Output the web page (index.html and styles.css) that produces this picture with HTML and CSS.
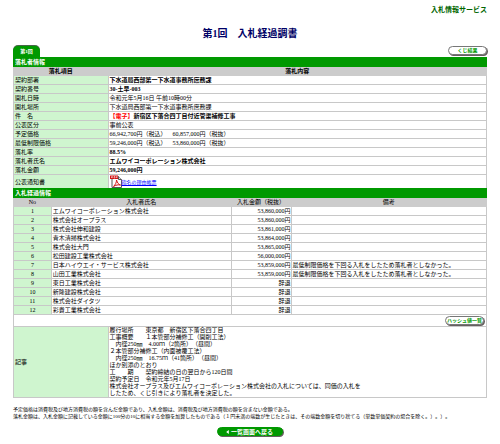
FILE: index.html
```
<!DOCTYPE html>
<html lang="ja">
<head>
<meta charset="utf-8">
<title>入札経過調書</title>
<link rel="stylesheet" href="styles.css">
</head>
<body>
<header class="service">入札情報サービス</header>
<main>
<h1>第1回　入札経過調書</h1>
<div class="toolbar">
  <button type="button" class="tab">第1回</button>
  <button type="button" class="pill">くじ結果</button>
</div>
<table class="award">
  <colgroup><col class="item"><col></colgroup>
  <tr><th class="bar" colspan="2">落札者情報</th></tr>
  <tr class="heads"><th>落札項目</th><th>落札内容</th></tr>
  <tr><th>契約部署</th><td><b>下水道局西部第一下水道事務所庶務課</b></td></tr>
  <tr><th>契約番号</th><td><b>30-土早-003</b></td></tr>
  <tr><th>開札日時</th><td>令和元年5月16日 午前10時00分</td></tr>
  <tr><th>開札場所</th><td>下水道局西部第一下水道事務所庶務課</td></tr>
  <tr><th>件　名</th><td><b><span class="red">【電子】</span>新宿区下落合四丁目付近管渠補修工事</b></td></tr>
  <tr><th>公表区分</th><td>事前公表</td></tr>
  <tr><th>予定価格</th><td>66,942,700円（税込）　60,857,000円（税抜）</td></tr>
  <tr><th>最低制限価格</th><td>59,246,000円（税込）　53,860,000円（税抜）</td></tr>
  <tr><th>落札率</th><td><b>88.5%</b></td></tr>
  <tr><th>落札者氏名</th><td><b>エムワイコーポレーション株式会社</b></td></tr>
  <tr><th>落札金額</th><td><b>59,246,000円</b></td></tr>
  <tr><th>公表通知書</th><td><div class="notice">
    <svg viewBox="0 0 24 26" aria-hidden="true">
      <path d="M4 3h13l6 6v16H4z" fill="#fff" stroke="#555" stroke-width="2"/>
      <path d="M17 3v6h6" fill="#ddd" stroke="#555" stroke-width="2"/>
      <path d="M0 1h16v7H0z" fill="#d21414"/>
      <path d="M3 6V3h2v2H3M8 3v3h2V3zM13 6V3h2M13 5h2" fill="none" stroke="#fff"/>
      <path d="M13 10c2 6 4 9 8 10-5-1-9 0-14 3 4-4 6-8 6-13z" fill="none" stroke="#d21414" stroke-width="2"/>
    </svg><a href="#notice">指名の理由帳票</a></div></td></tr>
</table>
<table class="bids">
  <colgroup><col class="no"><col class="name"><col class="price"><col></colgroup>
  <tr><th class="bar" colspan="4">入札経過情報</th></tr>
  <tr class="heads"><th>No</th><th>入札者氏名</th><th>入札金額（税抜）</th><th>備考</th></tr>
  <tr><th>1</th><td>エムワイコーポレーション株式会社</td><td>53,860,000円</td><td></td></tr>
  <tr><th>2</th><td>株式会社オープラス</td><td>53,860,000円</td><td></td></tr>
  <tr><th>3</th><td>株式会社伸和建設</td><td>53,861,000円</td><td></td></tr>
  <tr><th>4</th><td>青木清掃株式会社</td><td>53,864,000円</td><td></td></tr>
  <tr><th>5</th><td>株式会社大門</td><td>53,865,000円</td><td></td></tr>
  <tr><th>6</th><td>松田建設工業株式会社</td><td>56,000,000円</td><td></td></tr>
  <tr><th>7</th><td>日本ハイウエイ・サービス株式会社</td><td>53,859,000円</td><td>最低制限価格を下回る入札をしたため落札者としなかった。</td></tr>
  <tr><th>8</th><td>山田工業株式会社</td><td>53,859,000円</td><td>最低制限価格を下回る入札をしたため落札者としなかった。</td></tr>
  <tr><th>9</th><td>東日工業株式会社</td><td>辞退</td><td></td></tr>
  <tr><th>10</th><td>新隆建設株式会社</td><td>辞退</td><td></td></tr>
  <tr><th>11</th><td>株式会社ダイタツ</td><td>辞退</td><td></td></tr>
  <tr><th>12</th><td>彩貴工業株式会社</td><td>辞退</td><td></td></tr>
</table>
<table class="article">
  <colgroup><col class="item"><col></colgroup>
  <tr><td colspan="2"><div class="hash"><button type="button" class="pill">ハッシュ値一覧</button></div></td></tr>
  <tr><th>記事</th><td class="memo">履行場所　　東京都　新宿区下落合四丁目<br>工事概要　　１本管部分補修工（開削工法）<br>　内径250㎜　4.00ｍ（2箇所）（昼間）<br>２本管部分補修工（内面被覆工法）<br>　内径250㎜　16.75ｍ（41箇所）（昼間）<br>ほか別添のとおり<br>工　　期　　契約締結の日の翌日から120日間<br>契約予定日　令和元年5月17日<br>株式会社オープラス及びエムワイコーポレーション株式会社の入札については、同価の入札を<br>したため、くじ引きにより落札者を決定した。</td></tr>
</table>
<p class="notes">予定価格は消費税及び地方消費税の額を含んだ金額であり、入札金額は、消費税及び地方消費税の額を含まない金額である。<br>落札金額は、入札金額に記載している金額に100分の10に相当する金額を加算したものである（１円未満の端数が生じたときは、その端数金額を切り捨てる（単数単価契約の場合を除く。）。）。</p>
<div class="footer"><button type="button" class="pill back"><svg viewBox="0 0 4 6" aria-hidden="true"><path d="M4 0v6L0 3z" fill="#fff"/></svg>一覧画面へ戻る</button></div>
</main>
</body>
</html>
```
FILE: styles.css
```
* { box-sizing: border-box; }
body {
  margin: 0;
  padding: 5px 13px 0;
  background: #fff;
  color: #000;
  font: 6px/8px "Liberation Serif", "Noto Sans CJK JP", serif;
  text-spacing-trim: space-all;
}
.service {
  text-align: right;
  font-size: 7px;
  line-height: 10px;
  font-weight: bold;
  color: #060;
}
h1 {
  margin: 12px 0 4px;
  text-align: center;
  font-size: 10px;
  line-height: 14px;
  color: #006;
}
.toolbar {
  display: flex;
  justify-content: space-between;
  align-items: flex-end;
  height: 12px;
}
button {
  margin: 0;
  padding: 0;
  border: 0;
  font: bold 5px/8px "Liberation Serif", "Noto Sans CJK JP", serif;
  white-space: nowrap;
}
.tab {
  width: 27px;
  height: 11px;
  border-radius: 5px 5px 0 0;
  background: #090;
  color: #fff;
  box-shadow: 0 -1px 0 #486848;
}
.pill {
  width: 39px;
  height: 9px;
  margin: 0 1px 1px 0;
  border: 1px solid #777;
  border-radius: 5px;
  background: #fff;
  color: #090;
  line-height: 6px;
  box-shadow: 1px 1px 0 #665f5f;
}
.toolbar .pill { margin: 0 0 2px; }
table {
  width: 100%;
  border-collapse: collapse;
  table-layout: fixed;
}
table + table { margin-top: -1px; }
.item { width: 20%; }
.no { width: 8%; }
.name { width: 38%; }
.price { width: 60px; }
th, td {
  height: 8px;
  padding: 0 1px;
  border: 1px solid #c8c8c8;
  text-align: left;
  line-height: 8px;
}
th {
  background: #cff5cf;
  font-weight: normal;
}
.bar {
  border-color: #090;
  background: #090;
  color: #fff;
  font-weight: bold;
}
.heads th {
  border-color: #ccc;
  background: #ccc;
  text-align: center;
}
.award .heads th { font-weight: bold; }
.bids th:not(.bar) { text-align: center; }
.bids td:nth-child(3) {
  padding: 0;
  text-align: right;
}
.red { color: #f00; }
.notice {
  display: flex;
  align-items: center;
  height: 13px;
}
.notice svg {
  width: 12px;
  height: 13px;
}
.notice a {
  padding-top: 2px;
  color: #00f;
  font-size: 5px;
}
.hash {
  display: flex;
  justify-content: flex-end;
  padding-top: 1px;
}
.memo { line-height: 7px; }
.notes {
  margin: 8px 0 7px;
  font-size: 5px;
  line-height: 7px;
}
.footer { text-align: center; }
.back {
  display: inline-flex;
  justify-content: center;
  align-items: center;
  gap: 2px;
  width: 66px;
  border-color: #090;
  background: #090;
  color: #fff;
  font-size: 6px;
}
.back svg {
  width: 3px;
  height: 4px;
}
```
